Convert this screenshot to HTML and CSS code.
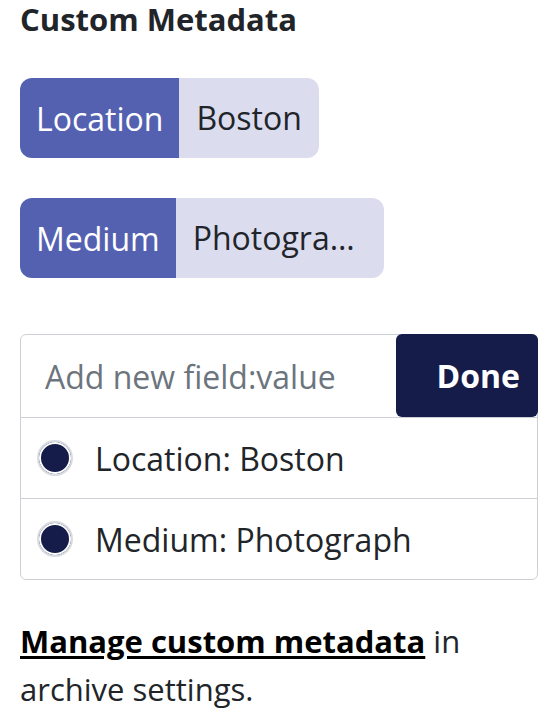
FILE: index.html
```html
<!DOCTYPE html>
<html lang="en">
<head>
    <meta charset="UTF-8">
    <meta name="viewport" content="width=device-width, initial-scale=1.0">
    <title>Custom Metadata</title>
    <link rel="stylesheet" href="styles.css">
</head>
<body>
    <div class="panel">
        <h2 class="title">Custom Metadata</h2>

        <div class="tag">
            <span class="tag-key">Location</span>
            <span class="tag-value">Boston</span>
        </div>
        <div class="tag">
            <span class="tag-key">Medium</span>
            <span class="tag-value">Photograph</span>
        </div>

        <div class="picker">
            <div class="picker-input">
                <input type="text" placeholder="Add new field:value">
                <button class="done-btn">Done</button>
            </div>
            <label class="option">
                <span class="radio"></span>
                Location: Boston
            </label>
            <label class="option">
                <span class="radio"></span>
                Medium: Photograph
            </label>
        </div>

        <p class="note"><a href="#">Manage custom metadata</a> in archive settings.</p>
    </div>
</body>
</html>
```

FILE: styles.css
```css
body {
    margin: 0;
    font-family: "Open Sans", "DejaVu Sans", sans-serif;
    color: #212529;
    background-color: white;
}
.panel {
    padding: 0 14px 0 20px;
}
.title {
    font-size: 31px;
    font-weight: 700;
    line-height: 38px;
    margin: 0 0 40px 0;
}
.tag {
    display: flex;
    width: fit-content;
    height: 80px;
    border-radius: 12px;
    overflow: hidden;
    font-size: 32px;
    margin-bottom: 40px;
}
.tag-key {
    display: flex;
    align-items: center;
    padding: 0 16px;
    background-color: #5461b1;
    color: white;
}
.tag-value {
    display: block;
    line-height: 80px;
    padding: 0 17px;
    max-width: 174px;
    white-space: nowrap;
    overflow: hidden;
    text-overflow: ellipsis;
    background-color: #dcdcef;
    color: #212529;
}
.picker {
    margin-top: 56px;
    border: 1px solid #ccd0d5;
    border-radius: 6px;
}
.picker-input {
    display: flex;
    height: 82px;
    border-bottom: 1px solid #ccd0d5;
}
.picker-input input {
    flex: 1;
    min-width: 0;
    border: none;
    outline: none;
    padding: 0 24px;
    font-family: inherit;
    font-size: 32px;
    color: #212529;
    background: transparent;
}
.picker-input input::placeholder {
    color: #6c757d;
}
.done-btn {
    width: 142px;
    margin: -1px -1px 0 0;
    padding: 0 18px 0 0;
    text-align: right;
    border: none;
    border-radius: 6px;
    background-color: #161c4a;
    color: white;
    font-family: inherit;
    font-size: 32px;
    font-weight: 700;
}
.option {
    display: flex;
    align-items: center;
    gap: 22px;
    height: 80px;
    padding-left: 16px;
    font-size: 32px;
}
.option + .option {
    border-top: 1px solid #ccd0d5;
}
.radio {
    width: 32px;
    height: 32px;
    border-radius: 50%;
    border: 2px solid #d8dce1;
    background-color: #161c4a;
    box-shadow: inset 0 0 0 2px white;
}
.note {
    font-size: 31px;
    line-height: 48px;
    margin: 37px 0 0 0;
}
.note a {
    color: black;
    font-weight: 700;
    text-decoration: underline;
    text-decoration-thickness: 3px;
    text-underline-offset: 3px;
}
```
